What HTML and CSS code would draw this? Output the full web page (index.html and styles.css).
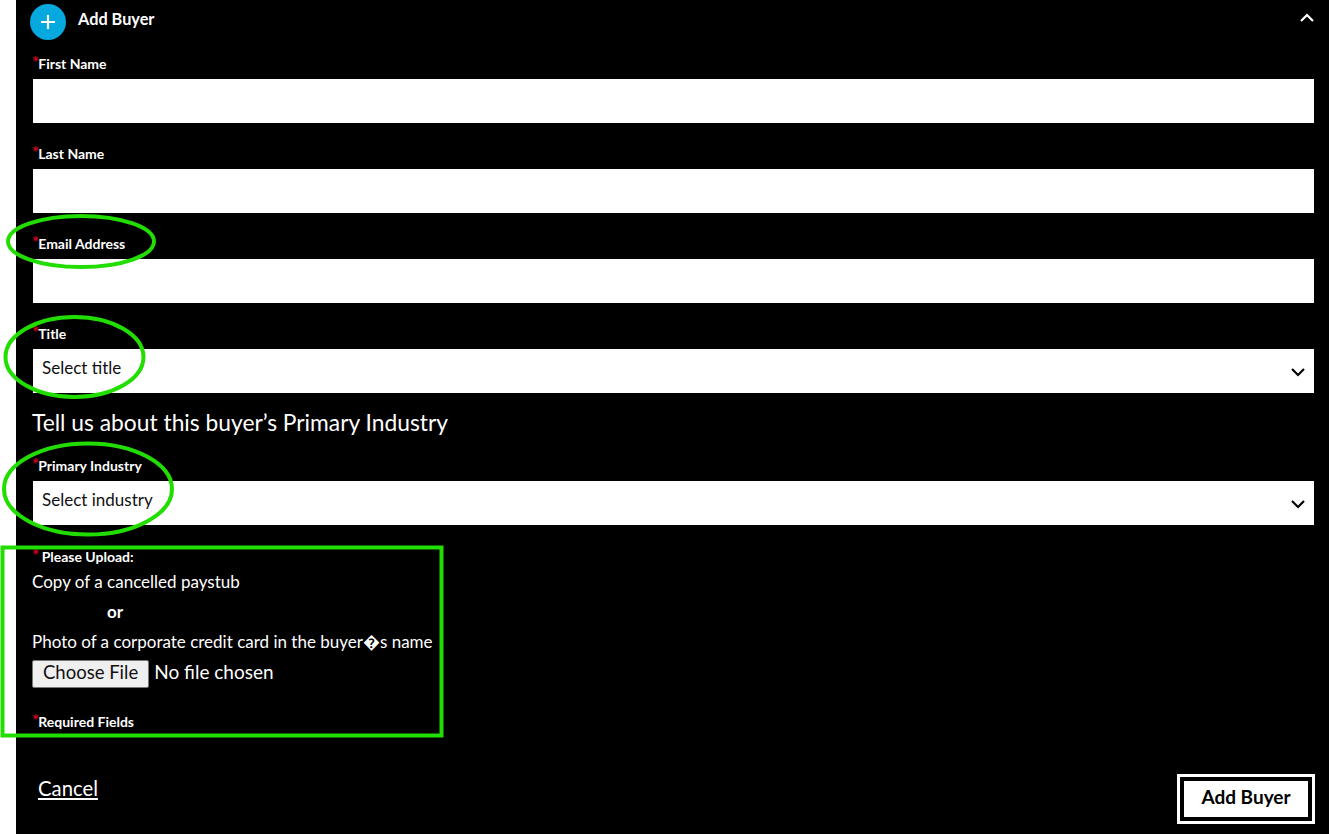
FILE: index.html
```html
<!DOCTYPE html>
<html lang="en">
<head>
    <meta charset="UTF-8">
    <meta name="viewport" content="width=device-width, initial-scale=1.0">
    <title>Add Buyer</title>
    <link rel="stylesheet" href="styles.css">
</head>
<body>
<div class="panel">
    <div class="panel-header">
        <span class="plus-circle">
            <svg width="16" height="16" viewBox="0 0 16 16"><path d="M8 1v14M1 8h14" stroke="#fff" stroke-width="2.2" fill="none"/></svg>
        </span>
        <span class="panel-title">Add Buyer</span>
        <svg class="collapse" width="16" height="10" viewBox="0 0 16 10"><path d="M2 8l6-6 6 6" stroke="#fff" stroke-width="2.2" fill="none"/></svg>
    </div>
    <form class="buyer-form">
        <div class="field">
            <label for="first-name"><span class="req">*</span>First Name</label>
            <input type="text" id="first-name">
        </div>
        <div class="field">
            <label for="last-name"><span class="req">*</span>Last Name</label>
            <input type="text" id="last-name">
        </div>
        <div class="field">
            <label for="email"><span class="req">*</span>Email Address</label>
            <input type="text" id="email">
        </div>
        <div class="field">
            <label for="title"><span class="req">*</span>Title</label>
            <div class="select-wrap">
                <select id="title"><option>Select title</option></select>
                <svg class="chevron" width="16" height="10" viewBox="0 0 16 10"><path d="M2 2l6 6 6-6" stroke="#000" stroke-width="2.2" fill="none"/></svg>
            </div>
        </div>
        <h2 class="section-title">Tell us about this buyer’s Primary Industry</h2>
        <div class="field">
            <label for="industry"><span class="req">*</span>Primary Industry</label>
            <div class="select-wrap">
                <select id="industry"><option>Select industry</option></select>
                <svg class="chevron" width="16" height="10" viewBox="0 0 16 10"><path d="M2 2l6 6 6-6" stroke="#000" stroke-width="2.2" fill="none"/></svg>
            </div>
        </div>
        <div class="upload">
            <div class="upload-label"><span class="req">*</span> Please Upload:</div>
            <div class="upload-line">Copy of a cancelled paystub</div>
            <div class="upload-line upload-or">or</div>
            <div class="upload-line">Photo of a corporate credit card in the buyer�s name</div>
            <input type="file" class="file-input">
        </div>
        <div class="required-note"><span class="req">*</span>Required Fields</div>
        <div class="form-actions">
            <a href="#" class="cancel">Cancel</a>
            <button type="button" class="add-btn"><span>Add Buyer</span></button>
        </div>
    </form>
</div>

<!-- green review marks drawn on top of the page -->
<svg class="marks" width="1329" height="834" viewBox="0 0 1329 834">
    <ellipse cx="81" cy="241.5" rx="73" ry="25.5"/>
    <ellipse cx="74.5" cy="357" rx="69" ry="40"/>
    <ellipse cx="88" cy="489" rx="84" ry="45.5"/>
    <rect x="2.5" y="547.5" width="439" height="188"/>
</svg>
</body>
</html>
```

FILE: styles.css
```css
html, body {
    margin: 0;
    padding: 0;
    height: 834px;
    overflow: hidden;
}
body {
    background-color: #fff;
    font-family: Lato, Arial, sans-serif;
    color: #fff;
    padding-left: 16px;
    position: relative;
}
.panel {
    background-color: #000;
    height: 834px;
    box-sizing: border-box;
    padding: 4px 15px 0 17px;
}
.panel-header {
    display: flex;
    align-items: center;
    height: 36px;
    margin-bottom: 15px;
}
.plus-circle {
    display: flex;
    align-items: center;
    justify-content: center;
    width: 36px;
    height: 36px;
    margin-left: -3px;
    border-radius: 50%;
    background-color: #05a9e0;
}
.panel-title {
    margin-left: 12px;
    margin-top: -7px;
    font-size: 16.3px;
    font-weight: 700;
}
.collapse {
    margin-left: auto;
    margin-right: -1px;
    margin-top: -9px;
}
.field {
    margin-bottom: 22px;
}
.field label, .upload-label, .required-note {
    display: block;
    height: 16px;
    line-height: 18px;
    font-size: 14px;
    font-weight: 700;
}
.field label {
    margin-bottom: 8px;
}
.req {
    color: #d0021b;
    font-size: 17px;
    line-height: 0;
    margin-left: -1px;
    margin-right: -1px;
}
.field input, .field select {
    display: block;
    width: 100%;
    height: 44px;
    box-sizing: border-box;
    border: none;
    border-radius: 0;
    background-color: #fff;
    padding: 0 9px;
    font-family: Lato, Arial, sans-serif;
    font-size: 17px;
    color: #111;
    appearance: none;
}
.field select {
    padding-bottom: 7px;
}
.select-wrap {
    position: relative;
}
.chevron {
    position: absolute;
    right: 8px;
    top: 18px;
}
.section-title {
    margin: -7px 0 21px -1px;
    height: 28px;
    line-height: 28px;
    font-size: 22.8px;
    font-weight: 400;
}
.upload {
    margin-top: 24px;
}
.upload-line {
    height: 30px;
    line-height: 30px;
    margin-left: -1px;
    font-size: 17px;
}
.upload-line.upload-or {
    padding-left: 75px;
    font-weight: 700;
}
.upload-label {
    margin-top: -1px;
    margin-bottom: 3px;
}
.file-input {
    display: block;
    margin: 3px 0 0 -1px;
    height: 28px;
    font-family: Lato, Arial, sans-serif;
    font-size: 19px;
    color: #fff;
}
.file-input::file-selector-button {
    height: 28px;
    margin-right: 5px;
    padding: 0 10px 4px;
    border: 1px solid #767676;
    border-radius: 2px;
    background-color: #efefef;
    color: #111;
    font-family: Lato, Arial, sans-serif;
    font-size: 18.5px;
}
.required-note {
    margin-top: 25px;
}
.form-actions {
    display: flex;
    justify-content: space-between;
    align-items: flex-start;
    margin-top: 45px;
}
.cancel {
    margin: 2px 0 0 5px;
    color: #fff;
    font-size: 20.3px;
}
.add-btn {
    width: 138px;
    height: 50px;
    box-sizing: border-box;
    margin-right: -1px;
    border: 3px solid #fff;
    background-color: #000;
    padding: 4px;
    cursor: pointer;
}
.add-btn span {
    display: flex;
    align-items: center;
    justify-content: center;
    height: 100%;
    box-sizing: border-box;
    padding-bottom: 5px;
    background-color: #fff;
    color: #000;
    font-family: Lato, Arial, sans-serif;
    font-size: 19px;
    font-weight: 700;
}
.marks {
    position: absolute;
    left: 0;
    top: 0;
    pointer-events: none;
    fill: none;
    stroke: #22dd00;
    stroke-width: 4;
}
```
